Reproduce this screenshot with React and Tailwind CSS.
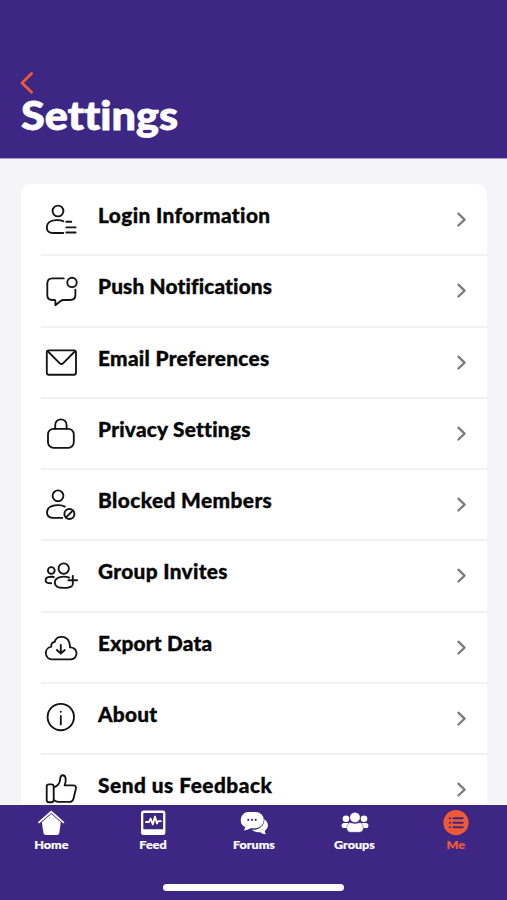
const PURPLE = '#3e2784';

const rows = [
  {
    label: 'Login Information',
    tracking: 'tracking-[0.4px]',
    icon: (
      <>
        <circle cx="14" cy="9" r="5.4" />
        <path d="M19.3 19.2C17.5 18.2 14.5 18 12 18.2C6 18.6 2.8 21.5 2.8 25.5C2.8 29.5 5 31 9 31H19.3" />
        <path d="M22.3 19.7H27.3M22.3 25.4H31.6M22.3 30.5H31.6" />
      </>
    ),
  },
  {
    label: 'Push Notifications',
    tracking: 'tracking-[0.15px]',
    icon: (
      <>
        <path d="M19.7 5.4H8.5Q3.3 5.4 3.3 10.6V22Q3.3 27 8.3 27H10.4Q11.4 27 11.4 28V32.2L16.6 28Q18 27 19.5 27H26Q31.4 27 31.4 22V16.7" />
        <circle cx="28" cy="9.4" r="4.7" />
      </>
    ),
  },
  {
    label: 'Email Preferences',
    tracking: 'tracking-[0.3px]',
    icon: (
      <>
        <rect x="2.8" y="5.3" width="29.2" height="24.4" rx="2" />
        <path d="M3.5 6L15.8 18.3Q17.4 19.8 19 18.3L31.3 6" />
      </>
    ),
  },
  {
    label: 'Privacy Settings',
    tracking: 'tracking-[0.23px]',
    icon: (
      <>
        <rect x="4" y="12.8" width="25.8" height="19" rx="5.5" />
        <path d="M11.2 12.8V9A5.7 5.7 0 0 1 22.6 9V12.8" />
      </>
    ),
  },
  {
    label: 'Blocked Members',
    tracking: 'tracking-[0.4px]',
    icon: (
      <>
        <circle cx="14" cy="8.8" r="5.4" />
        <path d="M20.8 19.6C18.8 18.4 15.8 18 13 18.2C6.5 18.6 3 21.5 3 25.5C3 29.5 5.5 30.9 9.5 30.9H18.3" />
        <circle cx="25.4" cy="27" r="5" strokeWidth="2" />
        <path d="M22 30.4L28.8 23.6" strokeWidth="2" />
      </>
    ),
  },
  {
    label: 'Group Invites',
    tracking: 'tracking-[0.33px]',
    icon: (
      <>
        <circle cx="7.3" cy="12.5" r="3.4" />
        <circle cx="19.7" cy="10.6" r="5.2" />
        <path d="M9.8 19C5.5 18.2 1.6 19.3 1.6 22.4C1.6 24.4 3.5 25.2 7.2 25.2" />
        <path d="M25.2 19.6C20 17.8 10.8 18.4 10.8 24.8C10.8 28.4 13 29.9 19.5 29.9C24 29.9 26.5 29.6 28 27.8" />
        <path d="M28.8 17.8V26.6M24.4 22.2H33.2" />
      </>
    ),
  },
  {
    label: 'Export Data',
    tracking: 'tracking-[0.2px]',
    icon: (
      <>
        <path d="M7.8 29.4A6.4 6.4 0 0 1 7.2 16.7C7 13.7 8.4 12 10.6 12C12.4 5.2 22.6 5 25.2 12.2C26 14.5 25.9 15.8 26 17.4A6 6 0 0 1 27 29.4Z" />
        <path d="M16.8 15V23.6M12.9 20L16.8 23.7L20.7 20" />
      </>
    ),
  },
  {
    label: 'About',
    tracking: 'tracking-[0.25px]',
    icon: (
      <>
        <circle cx="16.8" cy="16" r="13.2" />
        <path d="M16.8 15V23.4M16.8 10.6V10.8" />
      </>
    ),
  },
  {
    label: 'Send us Feedback',
    tracking: 'tracking-[0.5px]',
    icon: (
      <>
        <rect x="2.7" y="12.4" width="7" height="17.8" rx="2.2" />
        <path d="M9.8 15.5C13.5 14 16 11 16.2 7C16.3 4.5 16.8 3.2 18.7 3.2C22.4 3.2 22.3 9 20.6 13.3H29C31.4 13.3 32.4 14.8 31.8 17L29.6 26.2C29 28.8 27.8 29.9 25.5 29.9H14.5C12 29.9 11.2 28.8 9.8 28.2" />
      </>
    ),
  },
];

const tabs = [
  {
    label: 'Home',
    icon: (
      <>
        <path d="M2 13.4L14.2 2.8L26.4 13.4" fill="none" stroke="white" strokeWidth="1.8" strokeLinecap="round" strokeLinejoin="round" />
        <path d="M14.2 5L23.8 13.2L22.3 24Q22 26 20 26H8.8Q6.8 26 6.5 24L4.8 13.2Z" fill="white" />
      </>
    ),
  },
  {
    label: 'Feed',
    icon: (
      <>
        <rect x="2" y="1.6" width="24.4" height="24.5" rx="2.5" fill="white" />
        <rect x="4.3" y="3.9" width="19.8" height="16.3" rx="0.8" fill={PURPLE} />
        <path d="M7 13H10L11.6 9.5L13.8 15.5L16 7.5L18 14.5L19.3 12.2H21.8" fill="none" stroke="white" strokeWidth="1.8" strokeLinejoin="round" strokeLinecap="round" />
      </>
    ),
  },
  {
    label: 'Forums',
    icon: (
      <>
        <path d="M24.3 10.2C29.2 13.5 29 19.2 24.8 21.7Q24.8 23.7 26 25.3Q22.4 25 20.2 23.2C16.8 23.6 13.8 22.7 11.8 20.8C18.8 21.3 24.8 17 24.3 10.2Z" fill="white" />
        <path d="M8 3H15.7A8 8 0 0 1 15.7 19.2H10.6Q7.6 21.2 3.6 21.6Q5.3 19.8 5 18A8 8 0 0 1 8 3Z" fill="white" />
        <circle cx="8.3" cy="10.8" r="1.1" fill={PURPLE} />
        <circle cx="12" cy="10.8" r="1.1" fill={PURPLE} />
        <circle cx="15.7" cy="10.8" r="1.1" fill={PURPLE} />
      </>
    ),
  },
  {
    label: 'Groups',
    icon: (
      <g fill="white">
        <circle cx="5" cy="9.7" r="3.3" />
        <circle cx="23" cy="9.7" r="3.3" />
        <rect x="0.6" y="13.9" width="9" height="5.2" rx="2.6" />
        <rect x="18.4" y="13.9" width="9" height="5.2" rx="2.6" />
        <circle cx="14" cy="8.4" r="5.2" stroke={PURPLE} strokeWidth="0.5" />
        <path d="M8.4 13.6Q14 15.2 19.6 13.6Q22.5 16 22.3 19.5Q22 23.3 18.5 23.3H9.5Q6 23.3 5.7 19.5Q5.5 16 8.4 13.6Z" stroke={PURPLE} strokeWidth="0.5" />
      </g>
    ),
  },
  {
    label: 'Me',
    active: true,
    icon: (
      <>
        <circle cx="14" cy="13.7" r="12.6" fill="#ee5a35" />
        <path d="M11.4 9.2H20.7M11.4 13.7H20.7M11.4 18.2H20.7M7.8 9.2H8M7.8 13.7H8M7.8 18.2H8" stroke={PURPLE} strokeWidth="2" strokeLinecap="round" />
      </>
    ),
  },
];

function Row({ label, tracking, icon, last }) {
  return (
    <li className="flex h-[71.3px] shrink-0 pl-5">
      <div className={`flex w-full ${last ? '' : 'border-b-2 border-[#f1f1f2]'}`}>
        <svg className="mt-[17px] ml-[3px] h-9 w-[34px] shrink-0" viewBox="0 0 34 36" fill="none" stroke="#141414" strokeWidth="1.85" strokeLinecap="round" strokeLinejoin="round">
          {icon}
        </svg>
        <div className="mt-[17px] ml-5 flex-1">
          <span className={`inline-block origin-left scale-x-[1.04] text-[20px] leading-[26px] font-black whitespace-nowrap text-[#060606] [-webkit-text-stroke:0.35px_#060606] [font-variant-ligatures:none] ${tracking}`}>
            {label}
          </span>
        </div>
        <svg className="mt-[26px] mr-5 h-[17px] w-[11px] shrink-0" viewBox="0 0 11 17" fill="none" stroke="#7c7c7e" strokeWidth="2.3" strokeLinecap="round" strokeLinejoin="round">
          <path d="M2.4 2.7L8.6 8.6L2.4 14.5" />
        </svg>
      </div>
    </li>
  );
}

export default function App() {
  return (
    <div className="flex h-[900px] w-[507px] flex-col overflow-hidden bg-[#f5f5f8] font-['Lato',sans-serif]">
      <header className="flex h-[159px] shrink-0 flex-col border-b border-[#a598c8] bg-[#3e2784] pt-[71px] pl-5">
        <svg className="h-[23px] w-[14px] shrink-0" viewBox="0 0 14 23" fill="none" stroke="#ee5a35" strokeWidth="2.7" strokeLinecap="round" strokeLinejoin="round">
          <path d="M11.6 2.5L2 12L11.6 21.2" />
        </svg>
        <h1 className="ml-px origin-left scale-x-[1.08] self-start text-[40px] leading-[42px] font-black whitespace-nowrap text-white [-webkit-text-stroke:0.8px_white] [font-variant-ligatures:none]">Settings</h1>
      </header>

      <main className="min-h-0 flex-1 overflow-hidden pt-[25px] pr-5 pl-[21px]">
        <ul className="flex flex-col rounded-t-[11px] bg-white pt-px">
          {rows.map((row, i) => (
            <Row key={row.label} {...row} last={i === rows.length - 1} />
          ))}
        </ul>
      </main>

      <nav className="flex h-[95px] shrink-0 flex-col items-center bg-[#3e2784]">
        <div className="grid h-[79px] w-full grid-cols-[102px_101px_101px_101px_102px] pt-1">
          {tabs.map(({ label, icon, active }) => (
            <div key={label} className={`flex flex-col items-center ${active ? 'text-[#ee5a35]' : 'text-white'}`}>
              <svg className="h-7 w-7" viewBox="0 0 28 28">{icon}</svg>
              <span className="scale-x-[1.05] text-[12px] leading-4 font-black [-webkit-text-stroke:0.2px_currentColor]">{label}</span>
            </div>
          ))}
        </div>
        <div className="h-[6.5px] w-[181px] rounded-full bg-white" />
      </nav>
    </div>
  );
}
